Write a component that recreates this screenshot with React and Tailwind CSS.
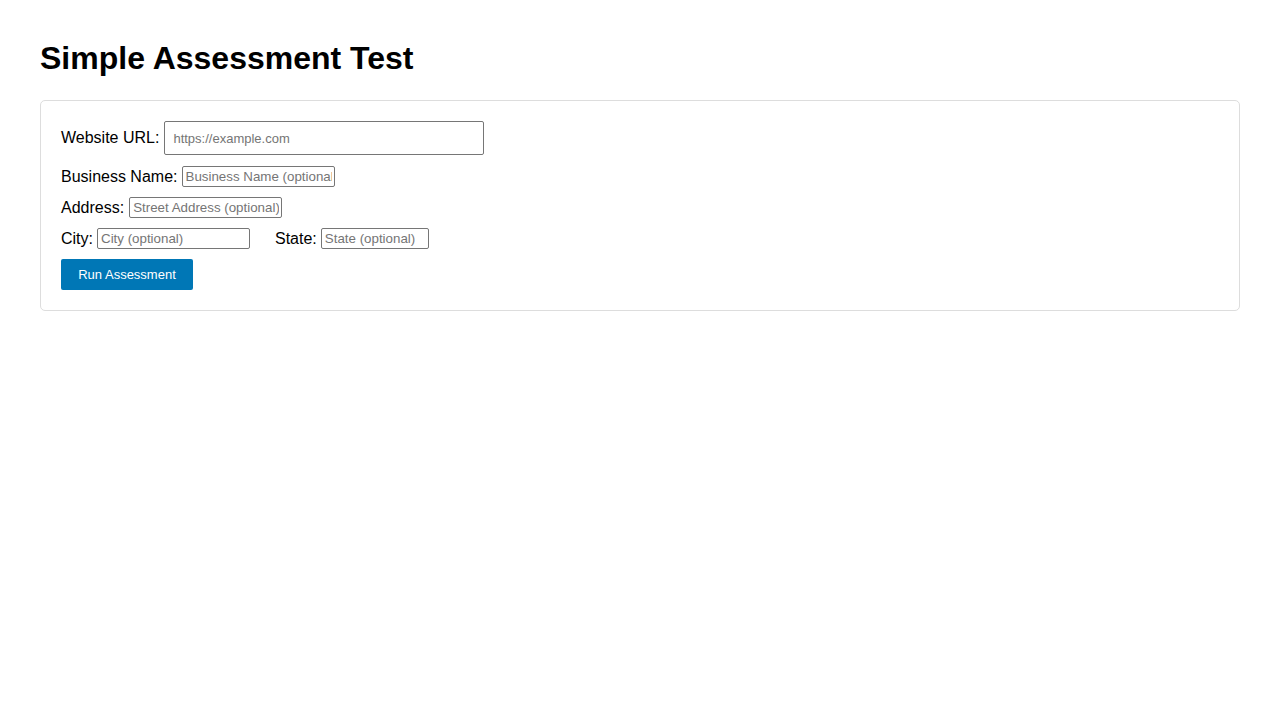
import React from 'react';

const smallInput =
    'h-[21px] border border-[#767676] rounded-[2px] pl-[3px] pr-[2px] text-[13.333px] leading-[16px] text-black placeholder:text-[#757575] outline-none bg-white';

export default function App() {
    return (
        <div className="min-h-screen bg-white text-black p-10 font-['Liberation_Sans',Arial,sans-serif]">
            <h1 className="text-[32px] leading-[37px] font-bold mb-[23px]">Simple Assessment Test</h1>

            {/* Form card */}
            <div className="border border-[#dddddd] rounded-[5px] p-5 flex flex-col gap-[10px] text-base leading-[18px]">
                <div className="flex items-center gap-[5px] pb-[1px]">
                    <label>Website URL:</label>
                    <input
                        type="text"
                        placeholder="https://example.com"
                        className="w-[320px] h-[34px] border border-[#767676] rounded-[2px] px-2 text-[13px] placeholder:text-[#757575] outline-none"
                    />
                </div>
                <div className="flex items-center gap-[4px]">
                    <label>Business Name:</label>
                    <input type="text" placeholder="Business Name (optional)" className={`${smallInput} w-[153px]`} />
                </div>
                <div className="flex items-center gap-[5px]">
                    <label>Address:</label>
                    <input type="text" placeholder="Street Address (optional)" className={`${smallInput} w-[153px]`} />
                </div>
                <div className="flex items-center gap-[4px]">
                    <label>City:</label>
                    <input type="text" placeholder="City (optional)" className={`${smallInput} w-[153px]`} />
                    <label className="ml-[21px]">State:</label>
                    <input type="text" placeholder="State (optional)" className={`${smallInput} w-[108px]`} />
                </div>
                <div className="flex">
                    <button className="h-[31px] w-[132px] bg-[#0077b6] text-white text-[13px] rounded-[2px]">
                        Run Assessment
                    </button>
                </div>
            </div>
        </div>
    );
}
